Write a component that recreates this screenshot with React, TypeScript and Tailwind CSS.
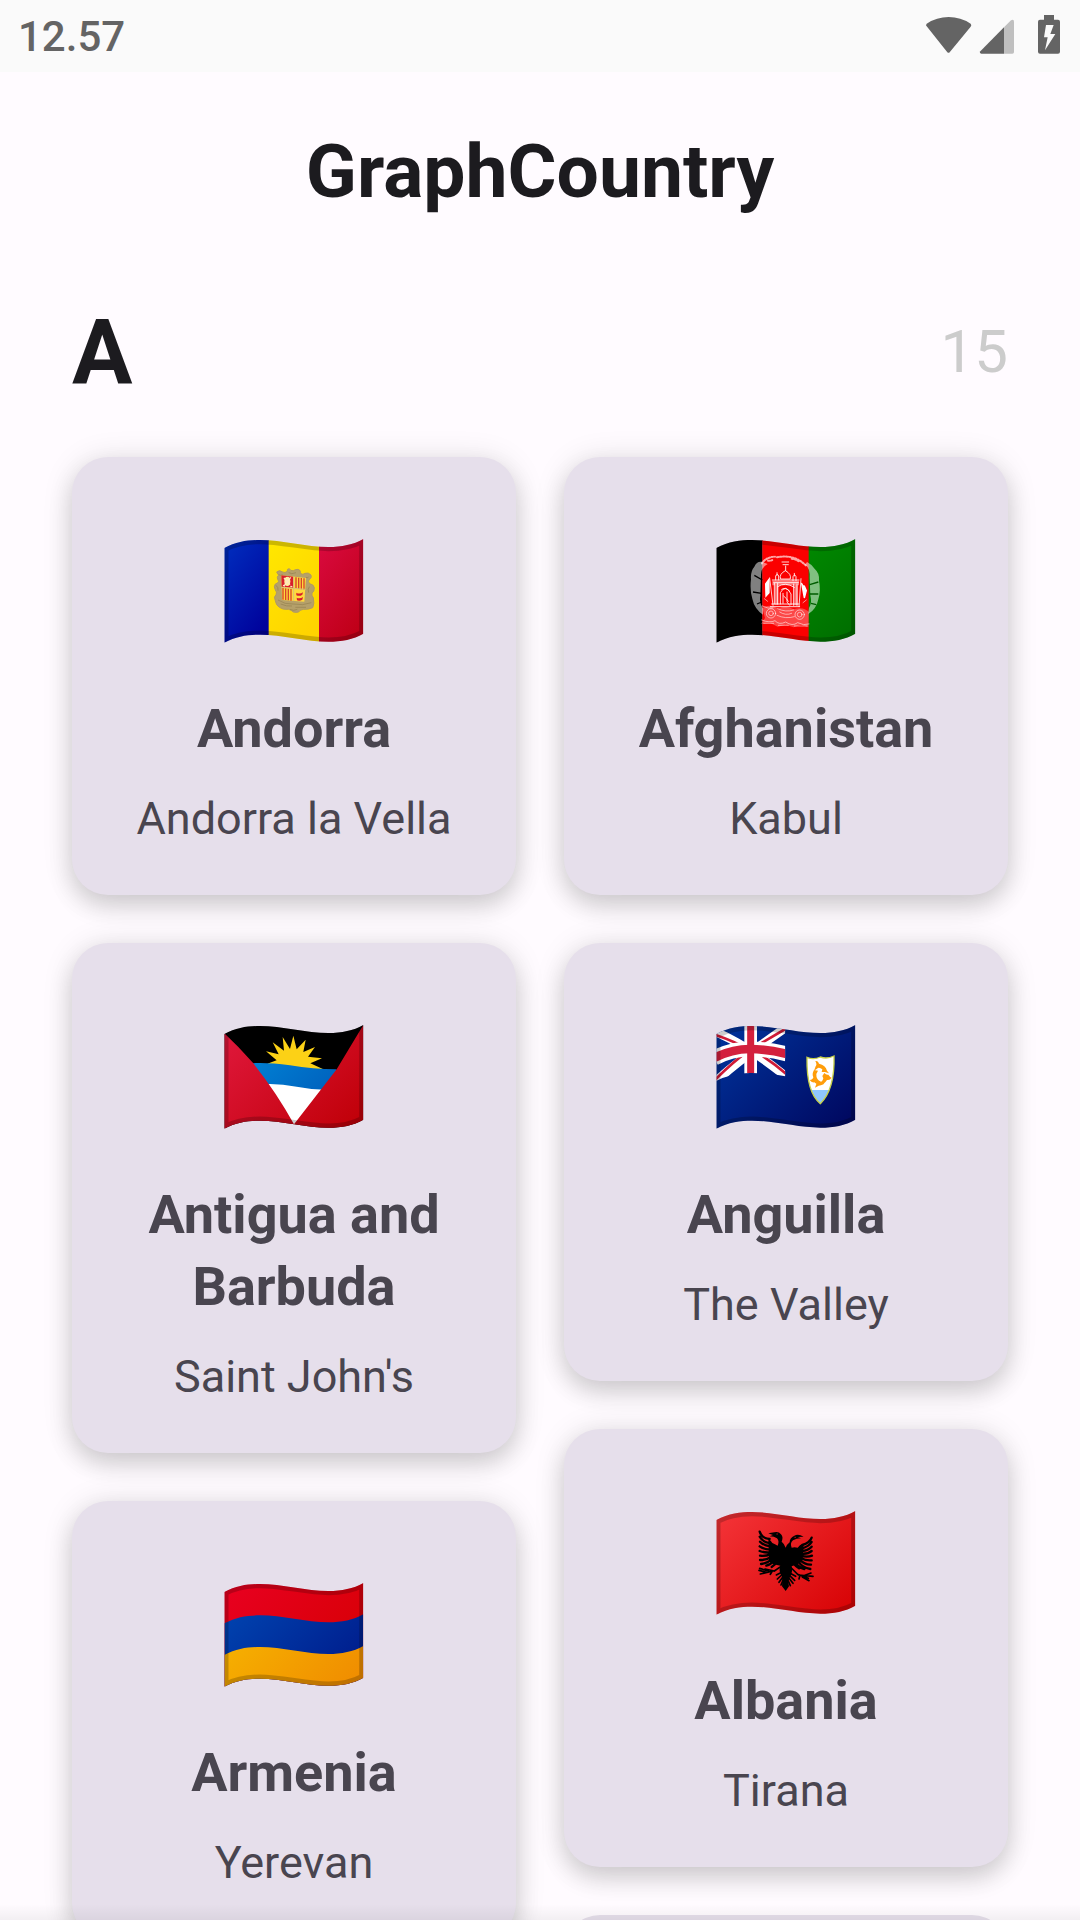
import type { ReactNode } from "react";

const WAVE =
  "M43 70C80 50 115 46 150 46C215 46 290 67 355 67C395 67 430 60 460 43V327C430 344 395 351 355 351C290 351 215 330 150 330C115 330 80 334 43 354Z";

function Flag({ id, label, children }: { id: string; label: string; children: ReactNode }) {
  return (
    <svg viewBox="36 37 432 324" role="img" aria-label={label} className="h-[108px] w-36">
      <defs>
        <clipPath id={`${id}-clip`}>
          <path d={WAVE} />
        </clipPath>
      </defs>
      <g clipPath={`url(#${id}-clip)`}>
        {children}
        <path d={WAVE} fill="none" stroke="#000" strokeOpacity="0.2" strokeWidth="25" />
      </g>
    </svg>
  );
}

function Tint({ id, from, to }: { id: string; from: string; to: string }) {
  return (
    <linearGradient id={id} gradientUnits="userSpaceOnUse" x1="80" y1="30" x2="420" y2="370">
      <stop offset="0" stopColor={from} />
      <stop offset="1" stopColor={to} />
    </linearGradient>
  );
}

function Andorra() {
  return (
    <Flag id="ad" label="Flag of Andorra">
      <defs>
        <linearGradient id="ad-blue" x1="0" y1="0" x2="0.6" y2="1">
          <stop offset="0" stopColor="#0030c0" />
          <stop offset="1" stopColor="#00039c" />
        </linearGradient>
        <linearGradient id="ad-yellow" x1="0" y1="0" x2="0.6" y2="1">
          <stop offset="0" stopColor="#ffe800" />
          <stop offset="1" stopColor="#ffd400" />
        </linearGradient>
        <linearGradient id="ad-red" x1="0" y1="0" x2="0.6" y2="1">
          <stop offset="0" stopColor="#da0a40" />
          <stop offset="1" stopColor="#c00018" />
        </linearGradient>
      </defs>
      <rect x="40" y="40" width="137" height="320" fill="url(#ad-blue)" />
      <rect x="176" y="40" width="152" height="320" fill="url(#ad-yellow)" />
      <rect x="327" y="40" width="140" height="320" fill="url(#ad-red)" />
      <path
        d="M200 142q8-8 18 0q7 4 14-2q-2-8 6-8q4 8 12 6q6-4 14-4q9 2 7 12q8 6 14 0q10-4 18 5q4 9-6 14q-4 6 2 12q12 2 14 12q0 12-7 16q-2 8 4 14q4 18-2 30q-12 6-28 5q-12 2-14 8q-8 2-16 0q-6-6-14-8q-18 2-28-6q-10-6-12-20q-6-12 2-18q4-8-2-14q-6-10 0-18q8-2 10-8q-8-14 0-18z"
        fill="#b5a06a"
        stroke="#b09a62"
        strokeWidth="3"
      />
      <path
        d="M206 150q6 4 12 0M236 144q8 6 22 0M288 158q6 4 8-2M198 182q8 6 6 16M298 186q-6 8-2 18M204 226q20 14 46 12q28 6 54-4M212 238q18 8 34 6M256 248q16 0 32 0M240 254q10 6 22 0"
        fill="none"
        stroke="#94804f"
        strokeWidth="2"
      />
      <path d="M214 152L288 160L283 231L216 226Z" fill="#ffd83d" />
      <path d="M214 152L250 156V190L215 186Z" fill="#d81e2c" />
      <ellipse cx="232" cy="170" rx="9" ry="14" fill="#fff0a0" />
      <path d="M222 160l18 20M242 158l-20 26M219 182l6 2M241 185l6 1" stroke="#ffe5c0" strokeWidth="4" />
      <path d="M258 158v34M266 159v34M274 160v34M282 161v34" stroke="#d8432a" strokeWidth="4" />
      <path d="M219 190v35M227 191v35M235 192v35M243 193v35" stroke="#d8432a" strokeWidth="4" />
      <path d="M259 204q10 6 20-1l-2 7q-8 6-18 2zM260 219q10 4 19-2l-2 8q-8 5-16 2z" fill="#d81e2c" />
      <path d="M251 156v73M214 188l72 6" stroke="#d8c27a" strokeWidth="3" />
    </Flag>
  );
}

function Afghanistan() {
  return (
    <Flag id="af" label="Flag of Afghanistan">
      <defs>
        <Tint id="af-green" from="#009a00" to="#006e00" />
      </defs>
      <g transform="translate(-7 0)">
        <rect x="46" y="40" width="143" height="320" fill="#000" />
        <rect x="188" y="40" width="140" height="320" fill="#fb0000" />
        <rect x="327" y="40" width="145" height="320" fill="url(#af-green)" />
        <g fill="#fff" fillOpacity="0.5">
          <path d="M188 112Q172 108 164 126Q152 140 154 164Q150 196 158 222Q164 252 190 270V252Q178 236 182 214L184 150Q184 128 204 118Z" />
          <path d="M322 112Q338 120 346 134Q360 146 358 168Q364 196 356 224Q350 254 326 268L328 250Q338 236 332 212L330 160Q332 130 316 120Z" />
        </g>
        <g fill="none" stroke="#fff" strokeLinecap="round">
          <path d="M187 116Q198 98 226 96M232 98Q284 88 318 122M205 108q8 2 16-4M276 102q14 2 24 10" strokeWidth="6" strokeDasharray="4 5" strokeOpacity="0.65" />
          <path d="M218 168H298V182H218ZM226 180h10v60h-10ZM284 180h10v62h-10Z" fill="#fff" fillOpacity="0.45" stroke="none" />
          <g strokeWidth="3" strokeOpacity="0.85">
            <path d="M247 112h20M250 120h16M258 124v14M242 162Q238 148 257 138Q276 148 272 162ZM228 166v-12q5-10 9 0v12M280 168v-12q5-10 9 0v12M232 144v8M284 146v8" />
            <path d="M218 166h80M222 174h74M224 176v62M234 176v62M282 178v64M292 178v64M234 186Q256 170 284 188M242 238v-34Q258 176 274 208v32M250 236v-30M216 238h82M212 246h88" />
            <path d="M262 202v30l8 10M252 214q10 8 14 16M246 194q12-8 24 6" />
          </g>
          <path d="M198 178l10-14v40l-9 10zM306 176l8 44l6-22l-6-14" fill="#fff" strokeWidth="4" />
          <path d="M210 160l10 82M304 162l-6 84" strokeWidth="3" strokeOpacity="0.8" />
          <path
            d="M188 250Q210 236 236 252Q258 240 282 254Q310 244 328 262L326 308L304 300L282 308L258 300L234 306L210 294L184 298L196 280Z"
            fill="#fff"
            fillOpacity="0.28"
            stroke="none"
          />
          <g strokeWidth="3" strokeOpacity="0.55">
            <circle cx="214" cy="266" r="14" />
            <circle cx="300" cy="270" r="14" />
            <circle cx="214" cy="266" r="7" />
            <circle cx="300" cy="270" r="7" />
            <path d="M188 244q18 10 32 6M234 252q24 12 48 4M240 262q18 12 36 4M232 272q26 12 52 4M186 286q24 10 40 2q12 14 32 4q20 14 36 2q18 10 34 4M192 296h30M236 302h30M284 304h38M194 222l10 8M320 226l-10 8" />
          </g>
        </g>
        <path d="M164 152l24 14M160 202l26 4M172 238l14-6" stroke="#000" strokeWidth="4" />
        <path d="M330 180l26-8M330 208h26M334 236l16 4" stroke="#005c00" strokeWidth="4" />
      </g>
    </Flag>
  );
}

function Antigua() {
  return (
    <Flag id="ag" label="Flag of Antigua and Barbuda">
      <defs>
        <Tint id="ag-red" from="#e0183c" to="#c00008" />
        <Tint id="ag-blue" from="#0090e0" to="#0050b0" />
      </defs>
      <g transform="translate(0 -4)">
        <rect x="36" y="36" width="440" height="330" fill="#000" />
        <path
          d="M172 163L200 153L168 126L206 135L188 99L222 124L218 83L240 119L250 79L260 120L287 91L280 128L315 113L294 142L336 147L301 162L345 182L250 178Z"
          fill="#fcd116"
        />
        <path d="M120 162Q170 158 240 168Q310 180 380 180L350 250L150 230Z" fill="url(#ag-blue)" />
        <path d="M165 224Q210 222 260 232Q300 240 345 241L252 350Z" fill="#fff" />
        <path d="M36 62L43 72Q86 112 130 162Q200 250 252 345V370H36Z" fill="url(#ag-red)" />
        <path d="M466 40L460 47L380 180L252 345V370H470Z" fill="url(#ag-red)" />
      </g>
    </Flag>
  );
}

function Anguilla() {
  return (
    <Flag id="ai" label="Flag of Anguilla">
      <defs>
        <Tint id="ai-blue" from="#00349c" to="#000860" />
        <clipPath id="ai-canton">
          <path d="M44 40H257V201Q200 190 150 191Q90 192 44 218Z" />
        </clipPath>
        <clipPath id="ai-shield">
          <path d="M322 144Q342 152 362 143Q382 150 403 140Q406 240 362 283Q320 250 322 144Z" />
        </clipPath>
      </defs>
      <g transform="translate(-7 -4)">
        <rect x="40" y="36" width="440" height="330" fill="url(#ai-blue)" />
        <g clipPath="url(#ai-canton)" fill="none">
          <path d="M44 66Q150 112 262 204M44 220Q120 150 262 52" stroke="#fff" strokeWidth="26" />
          <path d="M44 76Q100 94 153 124M153 118Q210 150 262 196M44 214Q100 156 153 120M153 120L262 56" stroke="#cf1b37" strokeWidth="8" />
          <path d="M44 146Q96 119 150 119Q204 119 262 134" stroke="#fff" strokeWidth="45" />
          <path d="M153 40V196" stroke="#fff" strokeWidth="38" />
          <path d="M44 146Q96 119 150 119Q204 119 262 134" stroke="#d3203d" strokeWidth="26" />
          <path d="M153 40V196" stroke="#d3203d" strokeWidth="21" />
        </g>
        <g clipPath="url(#ai-shield)">
          <rect x="315" y="135" width="95" height="107" fill="#fff" />
          <rect x="315" y="242" width="95" height="45" fill="#8fc8ff" />
        </g>
        <path d="M322 144Q342 152 362 143Q382 150 403 140Q406 240 362 283Q320 250 322 144Z" fill="none" stroke="#c6d04a" strokeWidth="4" />
        <g fill="#ff9d0a">
          <path d="M347 155Q356 153 358 163Q378 168 382 184L388 192L376 188L366 188L368 180Q358 172 352 178L343 184L348 171Q353 166 347 155Z" />
          <path d="M396 205Q391 214 382 212Q371 229 357 229L346 235L350 224Q369 220 371 207L368 200L374 191Q380 198 386 196Q392 205 396 205Z" />
          <path d="M330 212Q340 211 341 204Q336 194 343 182L355 184L350 194Q349 211 364 217L374 224L361 226Q349 226 344 219Q336 221 330 212Z" />
        </g>
      </g>
    </Flag>
  );
}

function Armenia() {
  return (
    <Flag id="am" label="Flag of Armenia">
      <defs>
        <Tint id="am-red" from="#e80020" to="#d40000" />
        <Tint id="am-blue" from="#0048b4" to="#001888" />
        <Tint id="am-orange" from="#f8bc00" to="#f08c00" />
      </defs>
      <rect x="36" y="36" width="440" height="330" fill="url(#am-red)" />
      <path d="M43 164C80 144 115 140 150 140C215 140 290 161 355 161C395 161 430 154 460 137V370H43Z" fill="url(#am-blue)" />
      <path d="M43 259C80 239 115 235 150 235C215 235 290 256 355 256C395 256 430 249 460 232V370H43Z" fill="url(#am-orange)" />
    </Flag>
  );
}

function Albania() {
  return (
    <Flag id="al" label="Flag of Albania">
      <defs>
        <Tint id="al-red" from="#f43438" to="#d80406" />
      </defs>
      <g transform="translate(-7 -7)">
        <rect x="40" y="40" width="440" height="330" fill="url(#al-red)" />
        <path
          d="M258 160Q254 148 246 142Q252 128 244 120Q236 110 224 114L206 117Q214 120 220 122L210 126Q224 126 232 132Q240 140 234 154Q226 150 218 146Q214 138 206 134L208 190Q206 204 222 210L242 214Q236 232 246 244Q250 260 247 276L258 290L268 276Q264 260 272 246Q280 232 276 216L296 208Q312 202 309 186L312 148Q300 150 294 160Q284 158 276 160Q270 146 280 138Q290 132 304 132L294 128L312 127Q296 118 284 124Q270 130 270 144Q262 150 258 160Z"
          fill="#000"
        />
        <g fill="none" stroke="#000" strokeWidth="7" strokeLinecap="round">
          <path d="M180 112Q186 132 210 134M180 127Q190 144 210 146M181 142Q192 154 212 156M180 156Q194 166 212 166M180 170Q196 176 212 174M181 184Q198 186 212 180M181 197Q200 198 214 188M184 209Q204 208 218 192M200 214Q214 210 222 198M216 218Q226 212 232 202" />
          <path d="M336 130Q330 146 308 152M336 143Q328 156 308 162M336 157Q326 168 306 170M336 170Q324 180 306 178M337 184Q322 190 304 184M336 198Q320 200 302 190M334 211Q316 212 300 196M332 224Q308 220 296 202M314 224Q298 220 288 206M298 222Q288 216 282 208" />
        </g>
        <g fill="none" stroke="#000" strokeWidth="5" strokeLinecap="round">
          <path d="M244 216L224 230L196 224M220 230L182 239M206 230L180 222M200 234L178 228M216 234L212 240M272 218L294 240L326 252M296 242L340 246M312 244L334 236M308 248L328 259M300 246L298 254" />
          <path d="M246 234L230 242M246 242L233 254M248 250L238 264M250 258L244 272M270 236L288 246M270 244L285 258M268 252L280 267M266 260L272 274" />
        </g>
        <path d="M230 119h5M284 129h5" stroke="#e81417" strokeWidth="2" />
      </g>
    </Flag>
  );
}

function StatusBar() {
  return (
    <div className="flex h-[72px] shrink-0 items-center justify-between bg-[#fafafa] pr-3.5 pl-[18px] text-[#646464]">
      <span className="pt-0.5 text-[42px] leading-[72px] font-medium">12.57</span>
      <div className="flex">
        <svg viewBox="72 0 150 216" className="h-[72px] w-[50px]" fill="#646464" aria-label="Wi-Fi" role="img">
          <path d="M80 79Q76 76 80 71Q110 51 146 51Q182 51 212 71Q216 76 212 80L149 157Q146 160 142 157Z" />
        </svg>
        <svg viewBox="222 0 144 216" className="mr-2.5 h-[72px] w-12" aria-label="Mobile signal" role="img">
          <path d="M312 82L333 61Q342 56 342 66V156Q342 161 337 161H312Z" fill="#bfbfbf" />
          <path d="M312 82V161H244Q237 160 241 154Z" fill="#646464" />
        </svg>
        <svg viewBox="396 0 102 216" className="h-[72px] w-[34px]" aria-label="Battery charging" role="img">
          <path d="M432 45H462V59H474Q480 59 480 65V155Q480 161 474 161H420Q414 161 414 155V65Q414 59 420 59H432Z" fill="#646464" />
          <path d="M438 75H461L451 102H466L435 151L443 112H432Z" fill="#fafafa" />
        </svg>
      </div>
    </div>
  );
}

type Country = { name: string; capital: string; flag: ReactNode };

function CountryCard({ name, capital, flag }: Country) {
  return (
    <article className="flex flex-col items-center rounded-[36px] bg-[#e6dfeb] px-10 pt-20 pb-10 text-center text-[#49454f] shadow-[0_12px_24px_rgba(0,0,0,0.14),0_2px_32px_rgba(0,0,0,0.11)]">
      {flag}
      <h3 className="mt-12 text-[54px] leading-[72px] font-bold">{name}</h3>
      <p className="mt-[18px] text-[45px] leading-[72px]">{capital}</p>
    </article>
  );
}

const leftColumn: Country[] = [
  { name: "Andorra", capital: "Andorra la Vella", flag: <Andorra /> },
  { name: "Antigua and Barbuda", capital: "Saint John's", flag: <Antigua /> },
  { name: "Armenia", capital: "Yerevan", flag: <Armenia /> },
];

const rightColumn: Country[] = [
  { name: "Afghanistan", capital: "Kabul", flag: <Afghanistan /> },
  { name: "Anguilla", capital: "The Valley", flag: <Anguilla /> },
  { name: "Albania", capital: "Tirana", flag: <Albania /> },
];

export default function App() {
  return (
    <div className="relative flex h-screen flex-col overflow-hidden bg-[#fffbff] font-['Roboto',sans-serif]">
      <StatusBar />
      <header className="flex h-[198px] shrink-0 items-center justify-center text-[#1c1b1f]">
        <h1 className="text-[75px] leading-[96px] font-bold">GraphCountry</h1>
      </header>
      <main className="flex min-h-0 flex-1 flex-col px-[72px]">
        <div className="mb-12 flex h-[139px] shrink-0 items-center justify-between pt-6">
          <h2 className="pt-1 text-[90px] leading-[108px] font-bold text-[#1c1b1f]">A</h2>
          <span className="text-[60px] leading-[72px] text-[#cccccc]">15</span>
        </div>
        <div className="grid grid-cols-2 items-start gap-12">
          <div className="flex flex-col gap-12">
            {leftColumn.map((c) => (
              <CountryCard key={c.name} {...c} />
            ))}
          </div>
          <div className="flex flex-col gap-12">
            {rightColumn.map((c) => (
              <CountryCard key={c.name} {...c} />
            ))}
            <div className="h-96 rounded-[36px] bg-[#e6dfeb]" />
          </div>
        </div>
      </main>
      <div className="pointer-events-none absolute inset-x-0 bottom-0 h-4 bg-linear-to-b from-transparent to-black/5" />
    </div>
  );
}
